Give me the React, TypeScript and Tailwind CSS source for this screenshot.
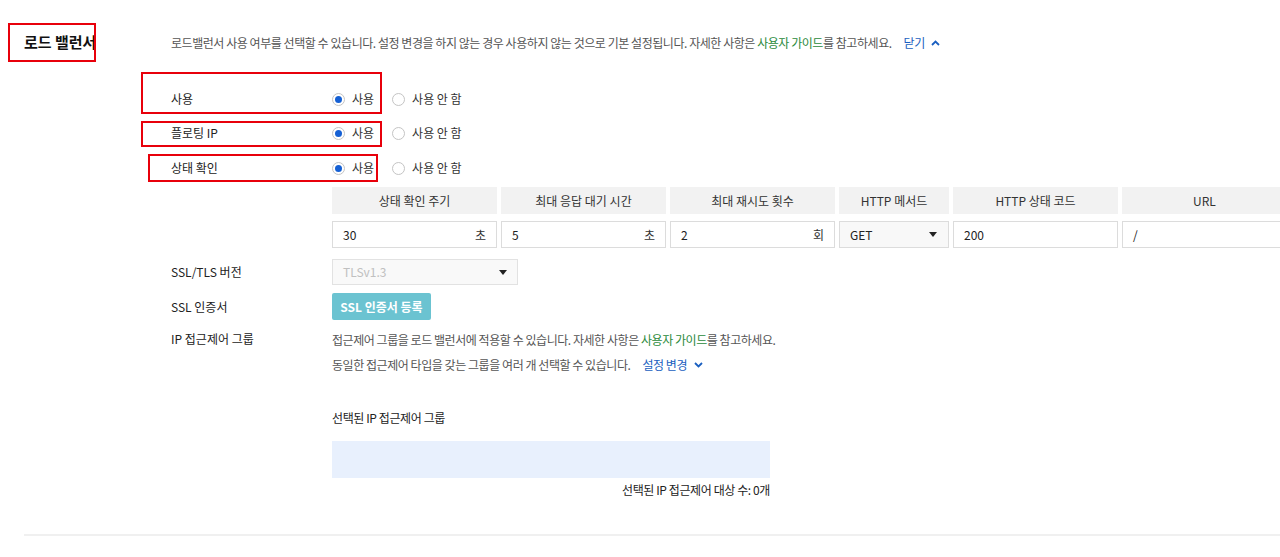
import React from "react";

const font = { fontFamily: '"Noto Sans CJK KR", "Noto Sans", sans-serif' };

const Radio = ({ checked }: { checked?: boolean }) => (
  <span className="inline-flex h-[13px] w-[13px] items-center justify-center rounded-full border border-[#c4c4c4] bg-white">
    {checked && <span className="h-[7px] w-[7px] rounded-full bg-[#1560d4]" />}
  </span>
);

const UseRow = ({ label, className }: { label: string; className: string }) => (
  <div className={`flex items-center ${className}`}>
    <div className="w-[161px] text-[12px] text-[#222]">{label}</div>
    <label className="flex items-center">
      <Radio checked />
      <span className="ml-[7px] text-[12px] text-[#333]">사용</span>
    </label>
    <label className="ml-[18px] flex items-center">
      <Radio />
      <span className="ml-[7px] text-[12px] text-[#333]">사용 안 함</span>
    </label>
  </div>
);

const Caret = () => (
  <svg width="8" height="5" viewBox="0 0 8 5" className="fill-[#222]">
    <path d="M0 0h8L4 5z" />
  </svg>
);

const Chevron = ({ up }: { up?: boolean }) => (
  <svg width="9" height="6" viewBox="0 0 9 6" className={up ? "" : "rotate-180"}>
    <path d="M1 5l3.5-3.5L8 5" fill="none" stroke="#1a5fc0" strokeWidth="1.8" />
  </svg>
);

const columns = [
  { title: "상태 확인 주기", w: "w-[165px]", value: "30", unit: "초" },
  { title: "최대 응답 대기 시간", w: "w-[165px]", value: "5", unit: "초" },
  { title: "최대 재시도 횟수", w: "w-[165px]", value: "2", unit: "회" },
  { title: "HTTP 메서드", w: "w-[110px]", value: "GET", select: true },
  { title: "HTTP 상태 코드", w: "w-[165px]", value: "200" },
  { title: "URL", w: "w-[165px]", value: "/" },
];

export default function App() {
  return (
    <div className="relative h-[557px] w-[1280px] overflow-hidden bg-white" style={font}>
      {/* header: section title + description */}
      <div className="flex pt-[31px] pl-[24px]">
        <h2 className="w-[147px] text-[15px] font-bold leading-[22px] text-[#111]">로드 밸런서</h2>
        <p className="mt-[1px] flex items-center text-[12px] leading-[22px] tracking-[-0.45px] text-[#555]">
          로드밸런서 사용 여부를 선택할 수 있습니다. 설정 변경을 하지 않는 경우 사용하지 않는 것으로 기본 설정됩니다. 자세한 사항은&nbsp;
          <span className="text-[#2a8a3a]">사용자 가이드</span>를 참고하세요.
          <span className="ml-[12px] text-[#1a5fc0]">닫기</span>
          <span className="ml-[6px]">
            <Chevron up />
          </span>
        </p>
      </div>

      <div className="pl-[171px]">
        <UseRow label="사용" className="mt-[35px] h-[20px]" />
        <UseRow label="플로팅 IP" className="mt-[14px] h-[20px]" />
        <UseRow label="상태 확인" className="mt-[15px] h-[20px]" />

        {/* health check table */}
        <div className="mt-[9px] ml-[161px] flex gap-[4px]">
          {columns.map((c) => (
            <div key={c.title} className={`${c.w} shrink-0`}>
              <div className="flex h-[27px] items-center justify-center bg-[#f2f2f2] text-[12px] text-[#333]">
                {c.title}
              </div>
              <div
                className={`mt-[7px] flex h-[27px] items-center justify-between border border-[#dcdcdc] px-[10px] text-[12px] text-[#222] ${
                  c.select ? "bg-[#f8f8f8]" : "bg-white"
                }`}
              >
                <span>{c.value}</span>
                {c.unit && <span className="text-[#333]">{c.unit}</span>}
                {c.select && (
                  <span className="mr-[1px]">
                    <Caret />
                  </span>
                )}
              </div>
            </div>
          ))}
        </div>

        {/* SSL/TLS version */}
        <div className="mt-[11px] flex items-center">
          <div className="w-[161px] text-[12px] text-[#222]">SSL/TLS 버전</div>
          <div className="flex h-[26px] w-[186px] items-center justify-between border border-[#e2e2e2] bg-[#f9f9f9] px-[10px] text-[12px] text-[#c0c0c0]">
            <span>TLSv1.3</span>
            <Caret />
          </div>
        </div>

        {/* SSL certificate */}
        <div className="mt-[8px] flex items-center">
          <div className="w-[161px] text-[12px] text-[#222]">SSL 인증서</div>
          <button className="flex h-[27px] w-[99px] items-center justify-center rounded-[2px] bg-[#6bc3d1] text-[12px] font-bold text-white">
            SSL 인증서 등록
          </button>
        </div>

        {/* IP access control group */}
        <div className="mt-[7px] flex">
          <div className="w-[161px] text-[12px] leading-[24px] text-[#222]">IP 접근제어 그룹</div>
          <div className="text-[12px] leading-[25px] tracking-[-0.45px] text-[#555]">
            <p>
              접근제어 그룹을 로드 밸런서에 적용할 수 있습니다. 자세한 사항은&nbsp;
              <span className="text-[#2a8a3a]">사용자 가이드</span>를 참고하세요.
            </p>
            <p className="flex items-center">
              동일한 접근제어 타입을 갖는 그룹을 여러 개 선택할 수 있습니다.
              <span className="ml-[12px] text-[#1a5fc0]">설정 변경</span>
              <span className="ml-[7px]">
                <Chevron />
              </span>
            </p>
          </div>
        </div>

        <div className="ml-[161px] w-[438px]">
          <p className="mt-[31px] text-[12px] leading-[20px] tracking-[-0.4px] text-[#222]">선택된 IP 접근제어 그룹</p>
          <div className="mt-[13px] h-[37px] bg-[#e8f0fd]" />
          <p className="mt-[2px] text-right text-[12px] leading-[20px] tracking-[-0.4px] text-[#222]">
            선택된 IP 접근제어 대상 수: 0개
          </p>
        </div>
      </div>

      <div className="mt-[34px] ml-[24px] h-[2px] bg-[#f0f0f0]" />

      {/* highlight boxes */}
      <div className="absolute left-[8px] top-[23px] h-[39px] w-[88px] border-2 border-[#e8000b]" />
      <div className="absolute left-[141px] top-[72px] h-[42px] w-[241px] border-2 border-[#e8000b]" />
      <div className="absolute left-[141px] top-[121px] h-[26px] w-[241px] border-2 border-[#e8000b]" />
      <div className="absolute left-[148px] top-[154px] h-[28px] w-[230px] border-2 border-[#e8000b]" />
    </div>
  );
}
